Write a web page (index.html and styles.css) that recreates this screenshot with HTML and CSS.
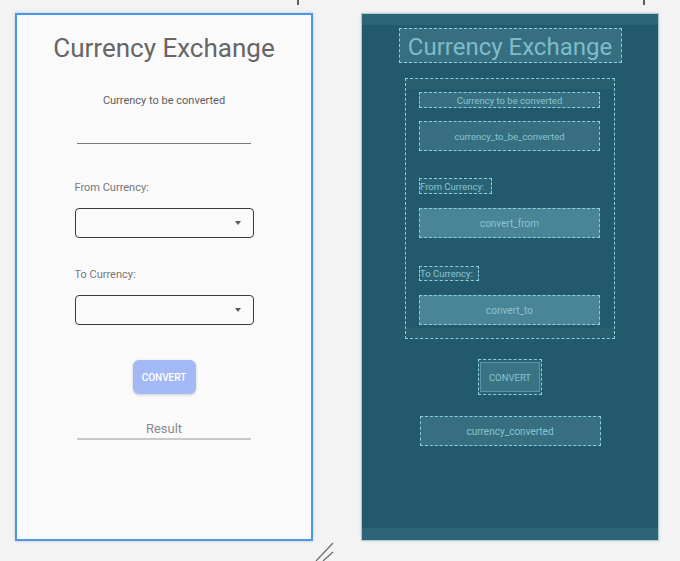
FILE: index.html
```html
<!DOCTYPE html>
<html>
<head>
<meta charset="utf-8">
<link rel="stylesheet" href="styles.css">
</head>
<body>
<div class="ticks">
  <span class="tick tick-a"></span>
  <span class="tick tick-b"></span>
</div>
<div class="stage">
  <div class="phone">
    <div class="title">Currency Exchange</div>
    <div class="sub">Currency to be converted</div>
    <div class="input-line"></div>
    <div class="form">
      <div class="label label-from">From Currency:</div>
      <div class="select select-from"><span class="arrow"></span></div>
      <div class="label label-to">To Currency:</div>
      <div class="select select-to"><span class="arrow"></span></div>
    </div>
    <button class="convert">CONVERT</button>
    <div class="result">Result</div>
  </div>
  <div class="blueprint">
    <div class="bp-title">Currency Exchange</div>
    <div class="bp-group">
      <div class="bp bp-sub">Currency to be converted</div>
      <div class="bp bp-field bp-input">currency_to_be_converted</div>
      <div class="bp bp-label bp-from">From Currency:</div>
      <div class="bp bp-field bp-spin bp-spin-from">convert_from</div>
      <div class="bp bp-label bp-to">To Currency:</div>
      <div class="bp bp-field bp-spin bp-spin-to">convert_to</div>
    </div>
    <div class="bp-btn"><div class="bp-btn-inner">CONVERT</div></div>
    <div class="bp bp-field bp-result">currency_converted</div>
  </div>
</div>
<div class="handle-row">
  <svg class="handle" width="22" height="20" viewBox="0 0 22 20">
    <line x1="3" y1="20" x2="20" y2="2" stroke="#6a6a6a" stroke-width="1.2"/>
    <line x1="10" y1="20" x2="20" y2="11" stroke="#6a6a6a" stroke-width="1.2"/>
  </svg>
</div>
</body>
</html>
```

FILE: styles.css
```css
* { box-sizing: border-box; }
html, body { margin: 0; padding: 0; }
body {
  width: 680px;
  height: 561px;
  overflow: hidden;
  background: #f3f3f3;
  font-family: Roboto, "Noto Sans", sans-serif;
}
.ticks {
  height: 13px;
  display: flex;
  align-items: flex-start;
}
.tick {
  display: block;
  width: 2px;
  height: 5px;
  background: #5e5e5e;
}
.tick-a { margin-left: 297px; }
.tick-b { margin-left: 344px; }

.stage {
  display: flex;
  padding-left: 15px;
  gap: 48px;
  height: 528px;
}

/* ---------- Design panel ---------- */
.phone {
  width: 298px;
  height: 528px;
  background: #fafafa;
  border: 2px solid #4a98ee;
  box-shadow: 0 0 3px rgba(0,0,0,0.18);
  display: flex;
  flex-direction: column;
  align-items: center;
}
.title {
  margin-top: 18px;
  height: 30px;
  line-height: 30px;
  font-size: 26px;
  color: #666;
  white-space: nowrap;
}
.sub {
  margin-top: 31px;
  height: 13px;
  line-height: 13px;
  font-size: 11px;
  color: #5e5e5e;
}
.input-line {
  margin-top: 36px;
  width: 174px;
  height: 1px;
  background: #7a7a7a;
}
.form {
  width: 179px;
  display: flex;
  flex-direction: column;
}
.label {
  height: 13px;
  line-height: 13px;
  font-size: 11px;
  color: #777;
}
.label-from { margin-top: 37px; }
.label-to { margin-top: 30px; }
.select {
  margin-top: 14px;
  height: 30px;
  border: 1px solid #3a3a3a;
  border-radius: 4px;
  display: flex;
  align-items: center;
  justify-content: flex-end;
  padding-right: 12px;
}
.arrow {
  width: 0;
  height: 0;
  border-left: 3.5px solid transparent;
  border-right: 3.5px solid transparent;
  border-top: 4px solid #5a5a5a;
}
.convert {
  margin-top: 35px;
  width: 63px;
  height: 34px;
  border: none;
  border-radius: 6px;
  background: #a2b9f6;
  color: #fff;
  font-family: Roboto, "Noto Sans", sans-serif;
  font-size: 10px;
  font-weight: 500;
  padding: 0;
  box-shadow: 0 1px 3px rgba(0,0,0,0.18);
}
.result {
  margin-top: 27px;
  width: 174px;
  height: 19px;
  line-height: 15px;
  font-size: 13px;
  color: #8a8a8a;
  text-align: center;
  border-bottom: 2px solid #c8c8c8;
}

/* ---------- Blueprint panel ---------- */
.blueprint {
  width: 298px;
  height: 528px;
  border: 1px solid #a9cdd6;
  box-shadow: 0 0 3px rgba(0,0,0,0.12);
  background:
    linear-gradient(#2c6577, #2c6577) top / 100% 11px no-repeat,
    linear-gradient(#2c6577, #2c6577) bottom / 100% 12px no-repeat,
    #225a6b;
  display: flex;
  flex-direction: column;
  align-items: center;
  color: #86c4d3;
}
.bp-title {
  margin-top: 14px;
  width: 223px;
  height: 35px;
  border: 1px dashed #86d0e0;
  background: #376f80;
  font-size: 24px;
  line-height: 37px;
  text-align: center;
  color: #7cbccb;
  white-space: nowrap;
}
.bp-group {
  margin-top: 15px;
  width: 210px;
  height: 261px;
  border: 1px dashed #86d0e0;
  background:
    linear-gradient(#28606f, #28606f) top / 100% 10px no-repeat,
    linear-gradient(#28606f, #28606f) bottom / 100% 10px no-repeat,
    #225a6b;
  padding-left: 13px;
  display: flex;
  flex-direction: column;
  align-items: flex-start;
}
.bp {
  border: 1px dashed #86d0e0;
  font-size: 9.5px;
  white-space: nowrap;
  color: #86c4d3;
}
.bp-sub {
  margin-top: 13px;
  width: 181px;
  height: 16px;
  line-height: 15px;
  text-align: center;
  background: #376f80;
}
.bp-field {
  width: 181px;
  height: 30px;
  line-height: 30px;
  text-align: center;
  background: #376f80;
}
.bp-input { margin-top: 13px; }
.bp-label {
  height: 16px;
  line-height: 15px;
  background: #2b6273;
}
.bp-from { margin-top: 27px; width: 73px; }
.bp-to { margin-top: 28px; width: 60px; height: 15px; line-height: 14px; }
.bp-spin { background: #4a8597; font-size: 10px; }
.bp-spin-from { margin-top: 14px; }
.bp-spin-to { margin-top: 14px; }
.bp-btn {
  margin-top: 20px;
  width: 64px;
  height: 36px;
  border: 1px dashed #86d0e0;
  padding: 2px 1px;
  background: #2b6273;
}
.bp-btn-inner {
  height: 100%;
  border: 1px solid #5a95a6;
  background: #3a7384;
  font-size: 9.5px;
  line-height: 29px;
  text-align: center;
  color: #86c4d3;
}
.bp-result {
  margin-top: 21px;
  font-size: 10px;
}

.handle-row {
  height: 20px;
  display: flex;
}
.handle {
  margin-left: 313px;
  display: block;
}
```
